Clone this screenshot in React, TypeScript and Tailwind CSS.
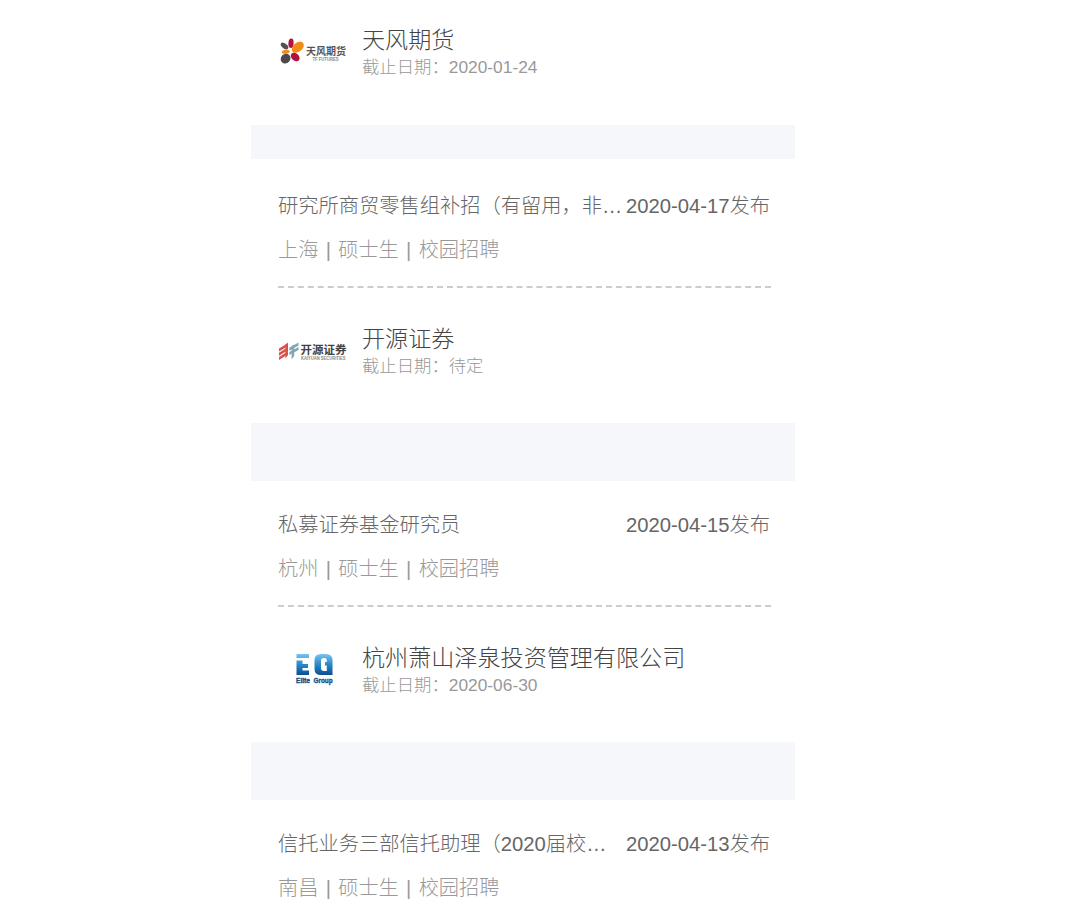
import type { ReactNode } from "react";

type Job = {
  title: string;
  published: string;
  tags: string[];
  company: string;
  deadline: string;
  logo: ReactNode;
};

function TfFuturesLogo() {
  return (
    <svg width="70" height="36" viewBox="0 0 70 36" fill="none">
      <ellipse cx="13" cy="9.2" rx="2.6" ry="4.7" fill="#b3123f" transform="rotate(4 13 9.2)" />
      <ellipse cx="19.8" cy="13.2" rx="6.8" ry="4.5" fill="#f58a14" transform="rotate(-38 19.8 13.2)" />
      <ellipse cx="6.5" cy="12" rx="4.4" ry="2.4" fill="#55504f" transform="rotate(38 6.5 12)" />
      <ellipse cx="7.8" cy="17.9" rx="4" ry="1.8" fill="#f58a14" transform="rotate(-8 7.8 17.9)" />
      <ellipse cx="7.6" cy="24.6" rx="5.2" ry="4.6" fill="#4d494b" transform="rotate(-45 7.6 24.6)" />
      <ellipse cx="17.2" cy="23" rx="5" ry="3.6" fill="#b3123f" transform="rotate(42 17.2 23)" />
      <text x="28" y="20.5" fontSize="10.2" fontWeight="700" fill="#5a5554" textLength="40" lengthAdjust="spacingAndGlyphs">
        天风期货
      </text>
      <text x="34.5" y="27" fontSize="4.8" fontWeight="700" fill="#888" textLength="26" lengthAdjust="spacingAndGlyphs">
        TF FUTURES
      </text>
    </svg>
  );
}

function KaiyuanLogo() {
  return (
    <svg width="70" height="36" viewBox="0 0 70 36" fill="none">
      <g fill="#db5145">
        <path d="M1 15.500l7.500-4.600v3L1 18.500z" />
        <path d="M1 19.700l7.500-4.600v3L1 22.700z" />
        <path d="M1 23.900l7.500-4.600v3L1 26.900z" />
        <path d="M7.400 11.500l2.600-2V22l-2.600 3.500z" />
      </g>
      <g fill="#83a6b5">
        <path d="M11.300 14.700l9.200-5.200v3l-9.200 5.200z" />
        <path d="M11.300 19.100l9.200-5.200v3l-9.200 5.200z" />
        <path d="M13.600 12.900l2.600-1.400v11.600l-2.600 3.400z" />
      </g>
      <text x="22.5" y="21" fontSize="11.4" fontWeight="700" fill="#454142" textLength="46" lengthAdjust="spacingAndGlyphs">
        开源证券
      </text>
      <text x="23" y="26.5" fontSize="4.5" fontWeight="700" fill="#888" textLength="44.5" lengthAdjust="spacingAndGlyphs">
        KAIYUAN SECURITIES
      </text>
    </svg>
  );
}

function EliteGroupLogo() {
  return (
    <svg width="70" height="36" viewBox="0 0 70 36" fill="none">
      <defs>
        <linearGradient id="elite" x1="0" y1="2" x2="0" y2="23" gradientUnits="userSpaceOnUse">
          <stop stopColor="#78c4ef" />
          <stop offset="0.5" stopColor="#2b88c8" />
          <stop offset="1" stopColor="#0b4f92" />
        </linearGradient>
      </defs>
      <g fill="url(#elite)">
        <path d="M18.5 2H31v4H18.500zM18.500 8.500h6V12H30v4h-5.500v2.500H31V23H18.500z" />
        <path
          fillRule="evenodd"
          d="M43 2h4.500q7 0 7 6v15H43q-6.500 0-6.500-6V8q0-6 6.500-6zM45.500 6q-2.500 0-2.500 3v7q0 3 3 3h2.800v-5.500H47V10h1.800V8.800q0-2.800-2-2.800z"
        />
      </g>
      <text x="18" y="31" fontSize="7.5" fontWeight="900" fill="#174f87" stroke="#174f87" strokeWidth="0.4" textLength="14" lengthAdjust="spacingAndGlyphs">
        Elite
      </text>
      <text x="35.5" y="31" fontSize="7.5" fontWeight="900" fill="#174f87" stroke="#174f87" strokeWidth="0.4" textLength="19" lengthAdjust="spacingAndGlyphs">
        Group
      </text>
    </svg>
  );
}

const jobs: Job[] = [
  {
    title: "研究所商贸零售组补招（有留用，非…",
    published: "2020-04-17",
    tags: ["上海", "硕士生", "校园招聘"],
    company: "开源证券",
    deadline: "待定",
    logo: <KaiyuanLogo />,
  },
  {
    title: "私募证券基金研究员",
    published: "2020-04-15",
    tags: ["杭州", "硕士生", "校园招聘"],
    company: "杭州萧山泽泉投资管理有限公司",
    deadline: "2020-06-30",
    logo: <EliteGroupLogo />,
  },
];

function JobSummary({ title, published, tags }: Pick<Job, "title" | "published" | "tags">) {
  return (
    <div className="h-[124px] pt-[29px] pr-[25px] pl-[27px]">
      <div className="flex h-[30px] items-center justify-between text-[20.25px] leading-[30px] whitespace-nowrap text-[#666]">
        <h3>{title}</h3>
        <span>{published}发布</span>
      </div>
      <p className="mt-[14px] h-[30px] text-[20.2px] leading-[30px] [word-spacing:1.7px] text-[#999]">
        {tags.join(" | ")}
      </p>
    </div>
  );
}

function Company({ logo, company, deadline }: Pick<Job, "logo" | "company" | "deadline">) {
  return (
    <div className="flex h-[52px] px-[27px]">
      <div className="mr-[14px] flex w-[70px] items-center">{logo}</div>
      <div>
        <h2 className="h-[29px] text-[23.1px] leading-[29px] text-[#444]">{company}</h2>
        <p className="h-[23px] text-[17.35px] leading-[25px] text-[#999]">截止日期：{deadline}</p>
      </div>
    </div>
  );
}

export default function App() {
  return (
    <main className="h-[908px] overflow-hidden bg-white font-['Liberation_Sans','Noto_Sans_CJK_SC',sans-serif] font-light">
      <div className="ml-[251px] w-[544px]">
        <div className="h-[125px] pt-[26px]">
          <Company logo={<TfFuturesLogo />} company="天风期货" deadline="2020-01-24" />
        </div>
        <div className="h-[34px] bg-[#f5f7fb]" />
        {jobs.map((job) => (
          <section key={job.company} className="first-of-type:pt-[3px]">
            <JobSummary title={job.title} published={job.published} tags={job.tags} />
            <div className="mr-6 ml-[27px] border-t-2 border-dashed border-[#ccc]" />
            <div className="h-[135px] pt-[37px]">
              <Company logo={job.logo} company={job.company} deadline={job.deadline} />
            </div>
            <div className="h-[58px] bg-[#f5f7fb]" />
          </section>
        ))}
        <JobSummary
          title="信托业务三部信托助理（2020届校…"
          published="2020-04-13"
          tags={["南昌", "硕士生", "校园招聘"]}
        />
      </div>
    </main>
  );
}
